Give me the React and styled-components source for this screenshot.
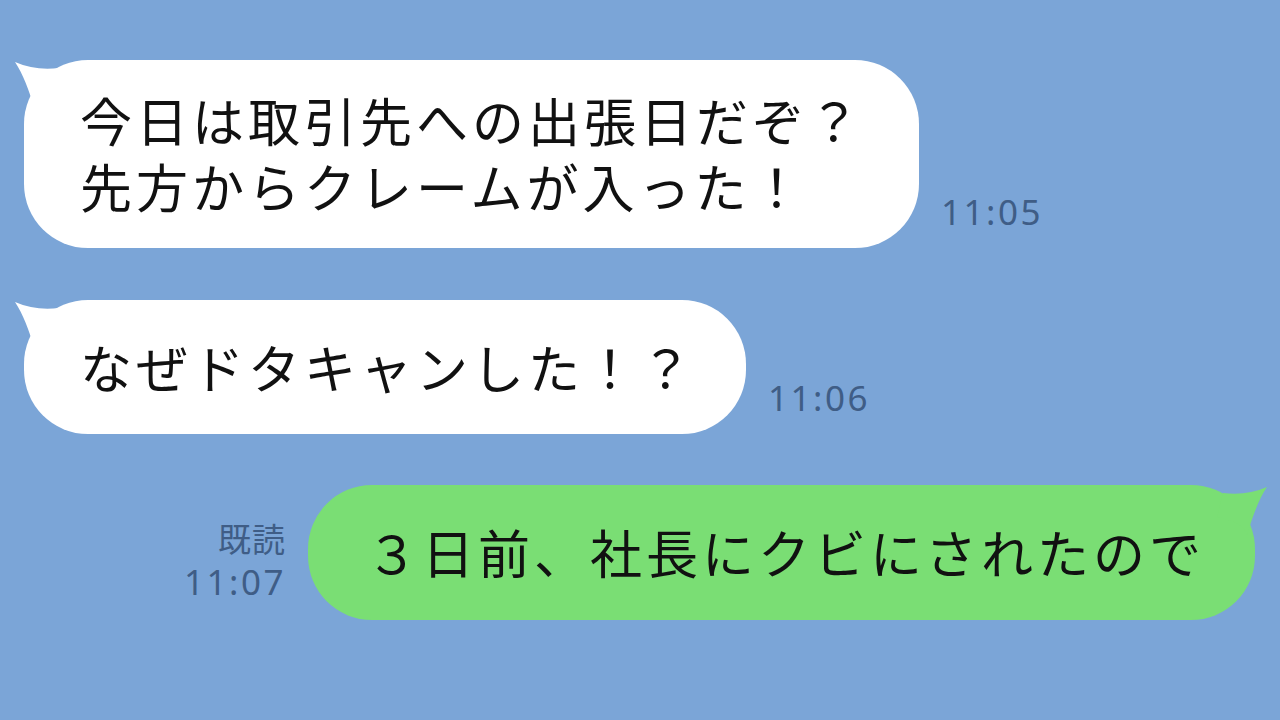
import React from 'react';
import styled, { createGlobalStyle } from 'styled-components';

const Global = createGlobalStyle`
    html, body {
        margin: 0;
        padding: 0;
        background: #7ba5d7;
    }
`

const Screen = styled.div`
    width: 1280px;
    height: 720px;
    background: #7ba5d7;
    display: flex;
    flex-direction: column;
    padding-top: 60px;
    box-sizing: border-box;
    gap: 52px;
    font-family: "Noto Sans CJK JP", "Noto Sans", sans-serif;
    overflow: hidden;
`

const Row = styled.div`
    display: flex;
    align-items: flex-end;
    justify-content: ${p => (p.$mine ? 'flex-end' : 'flex-start')};
    padding: ${p => (p.$mine ? '0 25px 0 0' : '0 0 0 24px')};
    margin-top: ${p => (p.$mine ? '-1px' : '0')};
    gap: 22px;
`

const Bubble = styled.div`
    position: relative;
    background: ${p => (p.$mine ? '#7ade74' : '#ffffff')};
    border-radius: 64px;
    padding: ${p => p.$pad};
    color: #111;
    font-size: 52px;
    line-height: 66px;
    letter-spacing: 4px;
    white-space: nowrap;
`

const Tail = styled.svg`
    position: absolute;
    top: 2px;
    ${p => (p.$mine ? 'right: -12px; transform: scaleX(-1);' : 'left: -9px;')}
    width: 60px;
    height: 50px;
`

const Meta = styled.div`
    display: flex;
    flex-direction: column;
    align-items: flex-end;
    margin-bottom: ${p => p.$mb};
    color: #3f5d86;
    font-family: "Noto Sans", "Noto Sans CJK JP", sans-serif;
    font-size: 35px;
    line-height: 44px;
    letter-spacing: 2.5px;
`

const Read = styled.span`
    font-family: "Noto Sans CJK JP", sans-serif;
    font-size: 33px;
    letter-spacing: 1px;
`

const TailShape = ({ color, mine }) => (
    <Tail viewBox="0 0 60 50" $mine={mine}>
        <path d="M0 0 C 14 6, 28 8, 44 6 L 50 30 C 30 34, 22 40, 20 48 C 14 28, 8 12, 0 0 Z" fill={color} />
    </Tail>
)

const App = () => (
    <Screen>
        <Global />
        <Row>
            <Bubble $pad="27px 55px 29px 56px">
                <TailShape color="#ffffff" />
                今日は取引先への出張日だぞ？<br />
                先方からクレームが入った！
            </Bubble>
            <Meta $mb="14px">11:05</Meta>
        </Row>
        <Row>
            <Bubble $pad="34px 50px 34px 56px">
                <TailShape color="#ffffff" />
                なぜドタキャンした！？
            </Bubble>
            <Meta $mb="14px">11:06</Meta>
        </Row>
        <Row $mine>
            <Meta $mb="16px">
                <Read>既読</Read>
                11:07
            </Meta>
            <Bubble $mine $pad="34px 50px 35px 58px">
                <TailShape color="#7ade74" mine />
                ３日前、社長にクビにされたので
            </Bubble>
        </Row>
    </Screen>
)

export default App;
